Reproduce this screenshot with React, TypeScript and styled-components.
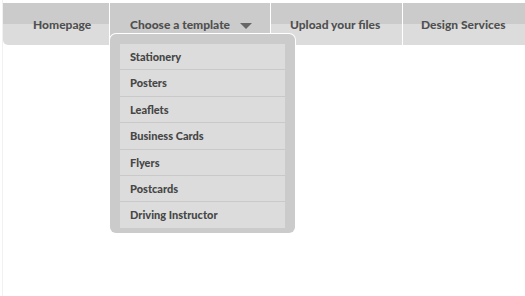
import React from 'react';
import styled, { createGlobalStyle } from 'styled-components';

const GlobalStyle = createGlobalStyle`
  html, body {
    margin: 0;
    padding: 0;
    background: #ffffff;
    font-family: Lato, "Open Sans", sans-serif;
  }
`;

const Page = styled.div`
  min-height: 296px;
  margin-left: 2px;
  border-left: 1px solid #f1f1f1;
  padding-top: 3px;
  box-sizing: border-box;
`;

const NavBar = styled.nav`
  display: flex;
  height: 42px;
  background: linear-gradient(#cbcbcb 0, #cbcbcb 50%, #dcdcdc 50%, #dcdcdc 100%);
  border-bottom-left-radius: 5px;
`;

const Tab = styled.div<{ $width?: number; $pl: number; $active?: boolean }>`
  position: relative;
  display: flex;
  align-items: center;
  box-sizing: border-box;
  width: ${({ $width }) => ($width ? `${$width}px` : 'auto')};
  flex: ${({ $width }) => ($width ? '0 0 auto' : '1 1 auto')};
  padding-left: ${({ $pl }) => $pl}px;
  border-right: 1px solid #ffffff;
  background: ${({ $active }) => ($active ? '#cbcbcb' : 'transparent')};
  font-size: 12px;
  font-weight: 900;
  color: #505050;
  white-space: nowrap;

  &:last-child {
    border-right: none;
  }
`;

const Arrow = styled.span`
  display: inline-block;
  margin-left: 10px;
  margin-top: 4px;
  width: 0;
  height: 0;
  border-left: 6px solid transparent;
  border-right: 6px solid transparent;
  border-top: 6px solid #666666;
`;

const Dropdown = styled.div`
  position: absolute;
  left: 0;
  top: 31px;
  width: 185px;
  box-sizing: border-box;
  padding: 10px 10px 5px;
  background: #cbcbcb;
  border-radius: 6px;
  box-shadow: 0 0 0 1px #ffffff;
  z-index: 2;
`;

const MenuList = styled.ul`
  list-style: none;
  margin: 0;
  padding: 0;
  background: #dcdcdc;
`;

const MenuItem = styled.li`
  height: 25.4px;
  line-height: 25.4px;
  padding-left: 10px;
  border-bottom: 1px solid #c9c9c9;
  font-size: 11px;
  font-weight: 900;
  color: #464646;

  &:last-child {
    border-bottom: none;
  }
`;

const templates = [
  'Stationery',
  'Posters',
  'Leaflets',
  'Business Cards',
  'Flyers',
  'Postcards',
  'Driving Instructor',
];

const App: React.FC = () => {
  return (
    <>
      <GlobalStyle />
      <Page>
        <NavBar>
          <Tab $width={107} $pl={30}>Homepage</Tab>
          <Tab $width={161} $pl={20} $active>
            Choose a template
            <Arrow />
            <Dropdown>
              <MenuList>
                {templates.map((t) => (
                  <MenuItem key={t}>{t}</MenuItem>
                ))}
              </MenuList>
            </Dropdown>
          </Tab>
          <Tab $width={132} $pl={19}>Upload your files</Tab>
          <Tab $pl={18}>Design Services</Tab>
        </NavBar>
      </Page>
    </>
  );
};

export default App;
